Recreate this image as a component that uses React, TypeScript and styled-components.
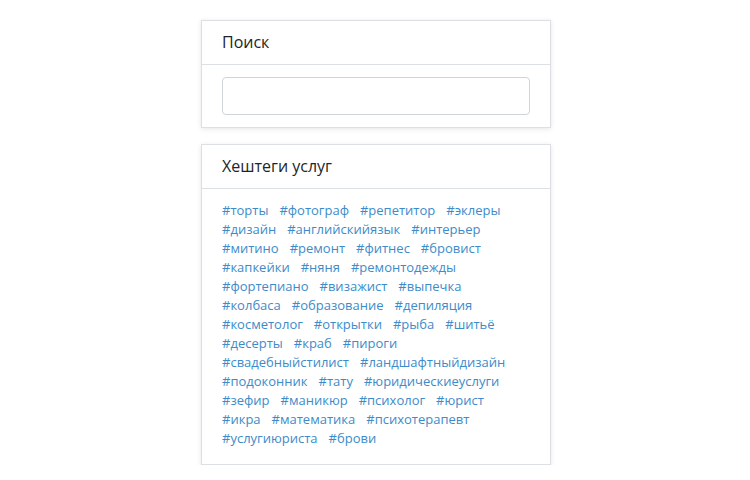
import React from 'react'
import styled, { createGlobalStyle } from 'styled-components'

const GlobalStyle = createGlobalStyle`
  body {
    margin: 0;
    background: #ffffff;
    font-family: "Open Sans", "Liberation Sans", sans-serif;
  }
`

const tags = [
  'торты', 'фотограф', 'репетитор', 'эклеры', 'дизайн', 'английскийязык',
  'интерьер', 'митино', 'ремонт', 'фитнес', 'бровист', 'капкейки', 'няня',
  'ремонтодежды', 'фортепиано', 'визажист', 'выпечка', 'колбаса',
  'образование', 'депиляция', 'косметолог', 'открытки', 'рыба', 'шитьё',
  'десерты', 'краб', 'пироги', 'свадебныйстилист', 'ландшафтныйдизайн',
  'подоконник', 'тату', 'юридическиеуслуги', 'зефир', 'маникюр', 'психолог',
  'юрист', 'икра', 'математика', 'психотерапевт', 'услугиюриста', 'брови',
]

const Page = styled.div`
  display: flex;
  flex-direction: column;
  align-items: center;
  gap: 16px;
  padding: 20px 0 0 2px;
`

const Card = styled.div`
  width: 350px;
  box-sizing: border-box;
  background: #fff;
  border: 1px solid #dcdfe3;
  box-shadow: 0 1px 5px rgba(0, 0, 0, 0.1);
`

const CardHeader = styled.div`
  padding: 12px 20px;
  border-bottom: 1px solid #dcdfe3;
  font-size: 16px;
  line-height: 19px;
  color: #212529;
`

const CardBody = styled.div<{ $bottom?: number }>`
  padding: 12px 20px ${(p) => p.$bottom ?? 12}px;
`

const SearchInput = styled.input`
  display: block;
  width: 100%;
  height: 38px;
  box-sizing: border-box;
  border: 1px solid #ced4da;
  border-radius: 4px;
  padding: 6px 12px;
  font: inherit;
  font-size: 14px;
  outline: none;
`

const TagList = styled.div`
  display: flex;
  flex-wrap: wrap;
  column-gap: 11px;
`

const Tag = styled.a`
  font-size: 13px;
  line-height: 19px;
  color: #3d8bc9;
  text-decoration: none;
  cursor: pointer;
`

export default function App() {
  return (
    <>
      <GlobalStyle />
      <Page>
        <Card>
          <CardHeader>Поиск</CardHeader>
          <CardBody>
            <SearchInput type="text" />
          </CardBody>
        </Card>
        <Card>
          <CardHeader>Хештеги услуг</CardHeader>
          <CardBody $bottom={16}>
            <TagList>
              {tags.map((t) => (
                <Tag key={t}>#{t}</Tag>
              ))}
            </TagList>
          </CardBody>
        </Card>
      </Page>
    </>
  )
}
